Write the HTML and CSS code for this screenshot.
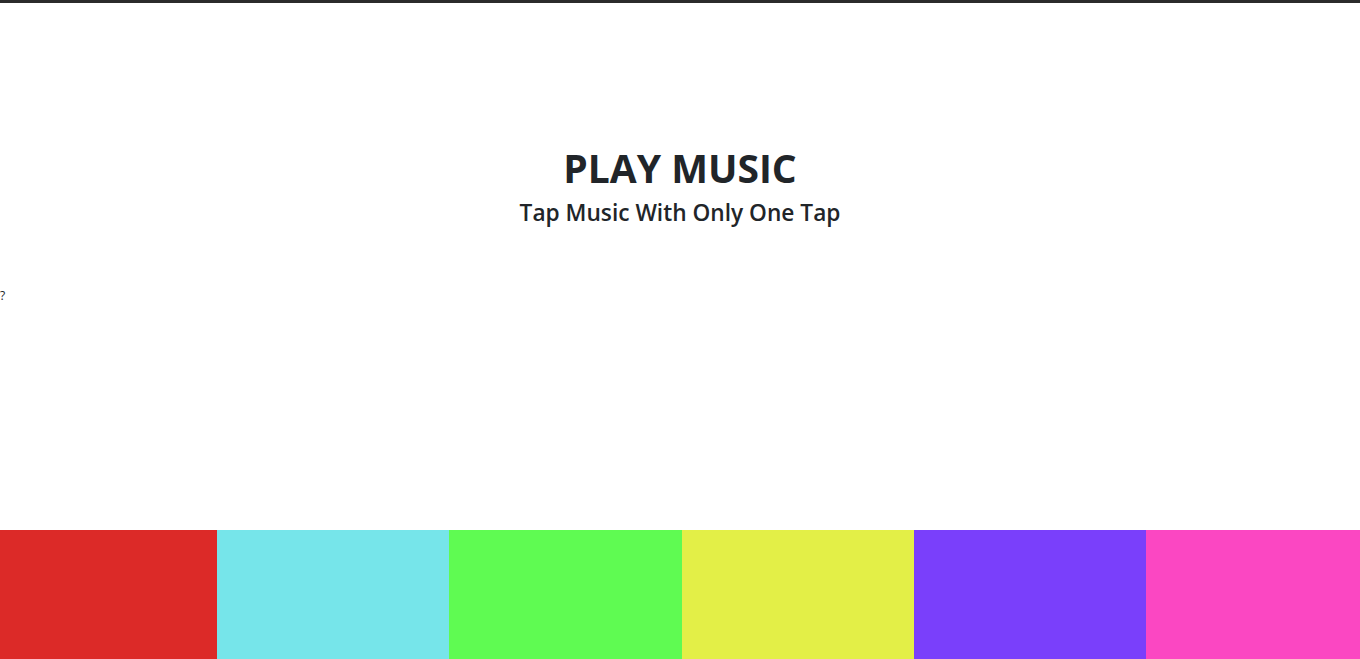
FILE: index.html
```html
<!DOCTYPE html>
<html lang="en">
<head>
<meta charset="utf-8">
<title>Play Music</title>
<link rel="stylesheet" href="styles.css">
</head>
<body>
<div class="topbar"></div>
<main class="page">
  <header class="hero">
    <h1 class="title">PLAY MUSIC</h1>
    <h4 class="subtitle">Tap Music With Only One Tap</h4>
  </header>
  <div class="note">?</div>
</main>
<section class="pads">
  <div class="pad pad-red"></div>
  <div class="pad pad-cyan"></div>
  <div class="pad pad-green"></div>
  <div class="pad pad-yellow"></div>
  <div class="pad pad-purple"></div>
  <div class="pad pad-pink"></div>
</section>
</body>
</html>
```
FILE: styles.css
```css
html, body {
  margin: 0;
  padding: 0;
  height: 100%;
  overflow: hidden;
}
body {
  font-family: "Open Sans", "Noto Sans", sans-serif;
  color: #212529;
  background: #fff;
  display: flex;
  flex-direction: column;
}
.topbar {
  height: 3px;
  background: #2b2b2b;
  flex: none;
}
.page {
  flex: 1;
  display: flex;
  flex-direction: column;
}
.hero {
  text-align: center;
  padding-top: 142px;
}
.title {
  margin: 0;
  font-size: 39px;
  font-weight: 700;
  line-height: 1.2;
}
.subtitle {
  margin: 7px 0 0;
  font-size: 22.7px;
  font-weight: 600;
  line-height: 1.2;
}
.note {
  margin-top: 63px;
  font-size: 12px;
  line-height: 1.2;
}
.pads {
  flex: none;
  height: 129px;
  display: grid;
  grid-template-columns: 217px 232px 233px 232px 232px 1fr;
}
.pad-red { background: #dc2a28; }
.pad-cyan { background: #76e5ea; }
.pad-green { background: #5ffb52; }
.pad-yellow { background: #e3ef47; }
.pad-purple { background: #7a3ffb; }
.pad-pink { background: #fb47c2; }
```
